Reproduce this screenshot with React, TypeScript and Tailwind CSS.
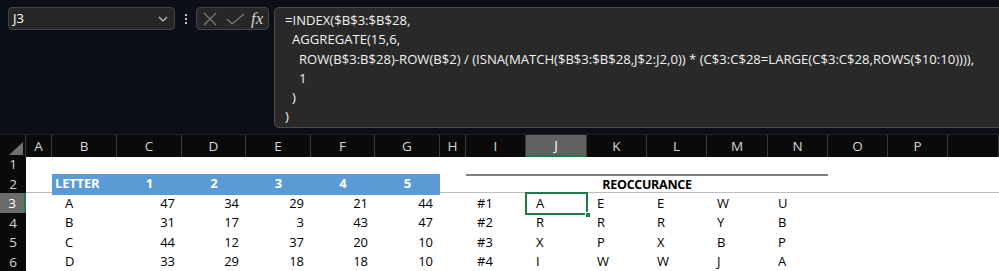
import React from 'react';

const COLS = 'grid grid-cols-[26px_26px_65px_65px_64px_65px_64px_65px_26px_60px_61px_60px_60px_61px_60px_60px_60px_1fr]';

const letters = ['A', 'B', 'C', 'D', 'E', 'F', 'G', 'H', 'I', 'J', 'K', 'L', 'M', 'N', 'O', 'P', ''];

const data = [
  { l: 'A', n: [47, 34, 29, 21, 44], k: '#1', r: ['A', 'E', 'E', 'W', 'U'] },
  { l: 'B', n: [31, 17, 3, 43, 47], k: '#2', r: ['R', 'R', 'R', 'Y', 'B'] },
  { l: 'C', n: [44, 12, 37, 20, 10], k: '#3', r: ['X', 'P', 'X', 'B', 'P'] },
  { l: 'D', n: [33, 29, 18, 18, 10], k: '#4', r: ['I', 'W', 'W', 'J', 'A'] },
];

const formula = [
  { indent: 'pl-0', text: '=INDEX($B$3:$B$28,' },
  { indent: 'pl-[7px]', text: 'AGGREGATE(15,6,' },
  { indent: 'pl-[14px]', text: 'ROW(B$3:B$28)-ROW(B$2) / (ISNA(MATCH($B$3:$B$28,J$2:J2,0)) * (C$3:C$28=LARGE(C$3:C$28,ROWS($10:10)))),' },
  { indent: 'pl-[14px]', text: '1' },
  { indent: 'pl-[7px]', text: ')' },
  { indent: 'pl-0', text: ')' },
];

function RowHead({ n, active }: { n: number; active?: boolean }) {
  return (
    <div
      className={
        active
          ? 'flex items-center justify-center bg-[#6a6a6a] text-white text-[13.5px] border-r-2 border-r-[#1f7a45] border-b border-b-[#3a3a3a]'
          : 'flex items-center justify-center bg-[#0a0a0a] text-[#d6d6d6] text-[13.5px] border-b border-b-[#3a3a3a]'
      }
    >
      {n}
    </div>
  );
}

export default function App() {
  return (
    <div className="w-[999px] h-[271px] overflow-hidden bg-[#0b0f17] font-['Open_Sans',sans-serif] text-[13px]">
      {/* formula bar */}
      <div className="h-[135px] flex items-start pt-[7px] pl-[8px] border-b border-[#1c222b]">
        <div className="shrink-0 w-[167px] h-[23px] flex items-center justify-between rounded-[4px] bg-[#272727] border border-[#434343] pl-[4px] pr-[6px] text-white text-[13px]">
          <span>J3</span>
          <svg width="10" height="6" viewBox="0 0 10 6" fill="none" stroke="#c8c8c8" strokeWidth="1.2">
            <path d="M1 1l4 4 4-4" />
          </svg>
        </div>
        <div className="shrink-0 w-[21px] h-[23px] flex flex-col items-center justify-center gap-[2px]">
          <span className="w-[2px] h-[2px] bg-[#c8c8c8]" />
          <span className="w-[2px] h-[2px] bg-[#c8c8c8]" />
          <span className="w-[2px] h-[2px] bg-[#c8c8c8]" />
        </div>
        <div className="shrink-0 w-[73px] h-[23px] flex items-center rounded-[4px] bg-[#272727] border border-[#434343] pl-[6px]">
          <svg width="14" height="14" viewBox="0 0 14 14" fill="none" stroke="#7c7c7c" strokeWidth="1.2">
            <path d="M1 1l12 12M13 1L1 13" />
          </svg>
          <svg className="ml-[9px]" width="19" height="12" viewBox="0 0 19 12" fill="none" stroke="#7c7c7c" strokeWidth="1.2">
            <path d="M1 6l5 5L18 1" />
          </svg>
          <span className="ml-[6px] font-['Liberation_Serif',serif] italic text-[17px] leading-none text-[#d4d4d4]">fx</span>
        </div>
        <div className="ml-[5px] w-[740px] h-[121px] shrink-0 rounded-[5px] bg-[#292929] border border-[#4a4a4a] pl-[10px] pt-[3px] text-[#f2f2f2] leading-[19.3px] text-[13.1px]">
          {formula.map((f, i) => (
            <div key={i} className={`${f.indent} whitespace-pre`}>{f.text}</div>
          ))}
        </div>
      </div>

      {/* column headers */}
      <div className={`${COLS} h-[19px] border-b border-[#c4c4c4] text-[#d6d6d6] text-[13.5px]`}>
        <div className="relative bg-[#0a0a0a] border-r border-[#3a3a3a]">
          <div className="absolute right-[2px] bottom-[2px] w-0 h-0 border-l-[14px] border-l-transparent border-b-[13px] border-b-[#707070]" />
        </div>
        {letters.map((c, i) =>
          c === 'J' ? (
            <div key={i} className="flex items-center justify-center bg-[#626262] text-white border-r border-[#3a3a3a] border-b-2 border-b-[#1f7a45]">
              {c}
            </div>
          ) : (
            <div key={i} className="flex items-center justify-center bg-[#0a0a0a] border-r border-[#3a3a3a]">
              {c}
            </div>
          )
        )}
      </div>

      {/* row 1 */}
      <div className={`${COLS} h-[19.5px] bg-white`}>
        <RowHead n={1} />
        <div className="col-span-17" />
      </div>

      {/* row 2 */}
      <div className={`${COLS} h-[19.5px] bg-white border-b border-[#bdbdbd] text-black`}>
        <RowHead n={2} />
        <div />
        <div className="flex items-center bg-[#5b9bd5] text-white font-bold pl-[3px] tracking-[-0.2px]">LETTER</div>
        {[1, 2, 3, 4, 5].map((n) => (
          <div key={n} className="flex items-center justify-center bg-[#5b9bd5] text-white font-bold">
            {n}
          </div>
        ))}
        <div />
        <div className="col-span-6 flex items-center justify-center border-t-2 border-[#808080] font-bold text-[12.5px] tracking-[-0.3px]">
          REOCCURANCE
        </div>
        <div className="col-span-3" />
      </div>

      {/* data rows */}
      {data.map((d, ri) => (
        <div key={ri} className={`${COLS} h-[19.5px] bg-white text-black`}>
          <RowHead n={ri + 3} active={ri === 0} />
          <div />
          <div className="flex items-center pl-[13px]">{d.l}</div>
          {d.n.map((n, i) => (
            <div key={i} className="flex items-center justify-end pr-[7px]">
              {n}
            </div>
          ))}
          <div />
          <div className="flex items-center pl-[11px]">{d.k}</div>
          {d.r.map((r, i) =>
            ri === 0 && i === 0 ? (
              <div key={i} className="relative flex items-center pl-[10px] outline-2 outline-[#1f7a45] -outline-offset-1">
                {r}
                <span className="absolute right-[-4px] bottom-[-4px] w-[6px] h-[6px] bg-[#1f7a45] border border-white" />
              </div>
            ) : (
              <div key={i} className="flex items-center pl-[10px]">
                {r}
              </div>
            )
          )}
          <div className="col-span-3" />
        </div>
      ))}
    </div>
  );
}
